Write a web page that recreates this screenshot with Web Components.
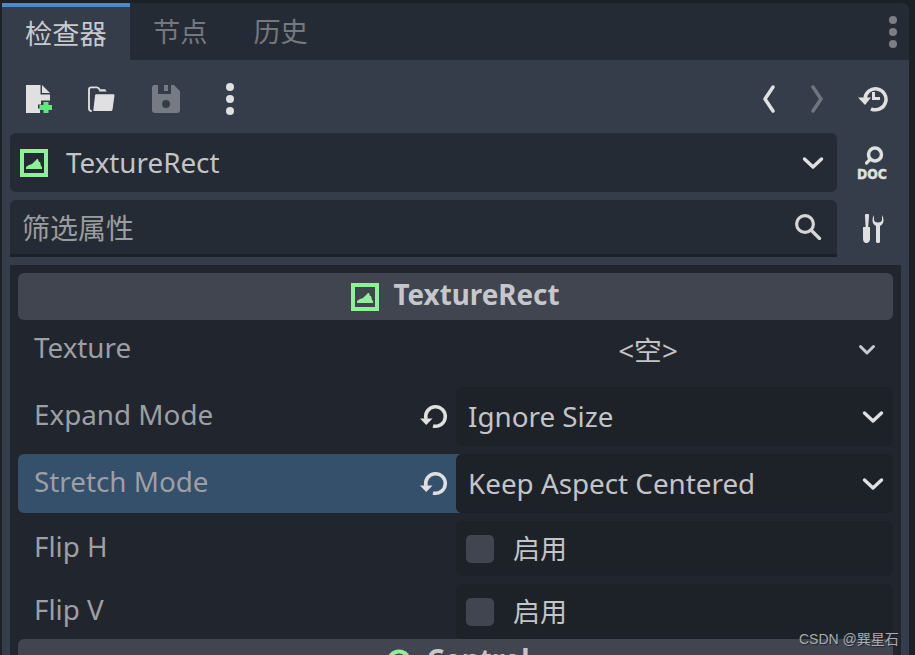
<!DOCTYPE html>
<html lang="zh">
<head>
<meta charset="utf-8">
<title>检查器</title>
<style>
  html, body { margin: 0; height: 655px; overflow: hidden; background: #1c2027; }
  body { font-family: "Noto Sans", "Noto Sans CJK SC", sans-serif; color: #d0d1d4; }
</style>
</head>
<body>
<inspector-dock>
  <dock-tabs slot="tabs"></dock-tabs>
  <dock-toolbar slot="toolbar"></dock-toolbar>
  <class-field slot="fields"></class-field>
  <filter-field slot="fields"></filter-field>
  <prop-section slot="list" title="TextureRect">
    <prop-row label="Texture" height="59"><value-picker text="&lt;空&gt;" centered></value-picker></prop-row>
    <prop-row label="Expand Mode" height="59" revert><value-picker text="Ignore Size"></value-picker></prop-row>
    <prop-row label="Stretch Mode" height="59" revert selected><value-picker text="Keep Aspect Centered"></value-picker></prop-row>
    <prop-row label="Flip H" height="55"><check-field text="启用"></check-field></prop-row>
    <prop-row label="Flip V" height="55"><check-field text="启用"></check-field></prop-row>
  </prop-section>
  <section-next slot="list" title="Control"></section-next>
</inspector-dock>
<water-mark>CSDN @巽星石</water-mark>

<script>
// 图标表
const ICONS = {
  newfile: `<svg width="28" height="28" viewBox="-2 0 28 28"><path fill="#e0e0e0" d="M0 0h14.500v9.500h9.500v6H15v4h-3v4h2v4.500H0z"/><path fill="#e0e0e0" d="M16 0l8 8h-8z"/><path fill="#5fe97a" d="M17.500 17h5v3H26.500v5h-4v3h-5v-3h-4v-5h4z"/></svg>`,
  folder: `<svg width="28" height="26" viewBox="0 0 30 28"><path fill="none" stroke="#e0e0e0" stroke-width="2" d="M4 27c-2 0-3-1-3-3V4c0-1.500 1-2.500 2.500-2.500h6c1.500 0 2 .5 3 2.500"/><path fill="#e0e0e0" d="M12 3.500h6.500l1.500 2.500h-8z"/><path fill="#e0e0e0" d="M9 9h18c1 0 1.500.5 1.400 1.500l-2 14.500c-.2 1.300-1 2-2.200 2H6.500c-.8 0-1-.5-.8-1.500L7.500 10.500C7.700 9.500 8 9 9 9z"/></svg>`,
  save: `<svg width="28" height="28" viewBox="0 0 28 28"><path fill-rule="evenodd" fill="#767a82" d="M2 0h4v9h13V0h3l6 6v19c0 2-1 3-3 3H3c-2 0-3-1-3-3V3c0-2 1-3 2-3zM14 15a4 4 0 1 0 0 8 4 4 0 0 0 0-8z"/><path fill="#767a82" d="M12 0h4v6h-4z"/></svg>`,
  dots: `<svg width="10" height="34" viewBox="0 0 10 34"><circle cx="5" cy="5" r="4" fill="#e0e0e0"/><circle cx="5" cy="17" r="4" fill="#e0e0e0"/><circle cx="5" cy="29" r="4" fill="#e0e0e0"/></svg>`,
  tabdots: `<svg width="10" height="34" viewBox="0 0 10 34"><circle cx="5" cy="5" r="4" fill="#7b7e84"/><circle cx="5" cy="17" r="4" fill="#7b7e84"/><circle cx="5" cy="29" r="4" fill="#7b7e84"/></svg>`,
  back: `<svg width="14" height="28" viewBox="0 0 14 28"><path fill="none" stroke="#e0e0e0" stroke-width="3.500" stroke-linecap="round" stroke-linejoin="round" d="M11 2L3 14l8 12"/></svg>`,
  forward: `<svg width="14" height="28" viewBox="0 0 14 28"><path fill="none" stroke="#70747b" stroke-width="3.500" stroke-linecap="round" stroke-linejoin="round" d="M3 2l8 12L3 26"/></svg>`,
  history: `<svg width="30" height="26" viewBox="0 0 30 26"><path fill="none" stroke="#e0e0e0" stroke-width="3.500" d="M7 13a10.500 10.500 0 1 1 6 9.800"/><path fill="#e0e0e0" d="M0 11.500h13L7 19z"/><path fill="#e0e0e0" d="M14 6h3v5h5v3h-8z"/></svg>`,
  chevron: `<svg width="22" height="14" viewBox="0 0 22 14"><path fill="none" stroke="#e0e0e0" stroke-width="3.400" stroke-linecap="round" stroke-linejoin="round" d="M2.500 3L11 11l8.500-8"/></svg>`,
  chevronsmall: `<svg width="18" height="12" viewBox="0 0 18 12"><path fill="none" stroke="#c9cacd" stroke-width="3" stroke-linecap="round" stroke-linejoin="round" d="M2.500 2.500L9 9l6.500-6.500"/></svg>`,
  doc: `<svg width="32" height="38" viewBox="0 0 32 38"><circle cx="18" cy="10.500" r="6.500" fill="none" stroke="#e0e0e0" stroke-width="3.500"/><path stroke="#e0e0e0" stroke-width="3.200" stroke-linecap="round" d="M13 15.500l-3.500 3.500"/><text transform="translate(0 34.500) scale(1 1.200)" font-family="'DejaVu Sans'" font-weight="700" font-size="12.400" stroke="#e0e0e0" stroke-width=".4" fill="#e0e0e0">DOC</text></svg>`,
  search: `<svg width="28" height="28" viewBox="0 0 28 28"><circle cx="11" cy="12" r="8.400" fill="none" stroke="#d5d5d5" stroke-width="3.200"/><path stroke="#d5d5d5" stroke-width="3.400" stroke-linecap="round" d="M17 18l8.500 8.500"/></svg>`,
  tools: `<svg width="26" height="30" viewBox="0 0 26 30"><path fill="#e0e0e0" d="M5 1.500a2 2 0 0 1 4 0L8.200 13h1.300c.6 0 .5.500.5 1v11c0 2.500-1.800 4-3.200 4h-1C4.800 29 3 27.500 3 25V14c0-.5 0-1 .6-1h2z"/><path fill="#e0e0e0" d="M14 1c-1 2-1.500 3.500-1.500 5.500 0 2.700 1.500 4.500 3.500 5.500v15.500c0 1 1 1.500 2 1.500s2-.5 2-1.500V12c2-1 3.500-2.800 3.500-5.500C23.500 4.500 23 3 22 1v5c0 1-1.500 2.500-4 2.500S14 7 14 6z"/></svg>`,
  texturerect: `<svg width="28" height="28" viewBox="0 0 28 28"><rect x="2" y="2" width="24" height="24" fill="none" stroke="#8ef097" stroke-width="4"/><path fill="#8ef097" d="M6 20v-2l3-2 3-1 2-2 3-3h1l1 3h1l1 4 1 1v2z"/></svg>`,
  revert: `<svg width="28" height="28" viewBox="0 0 28 28"><path fill="none" stroke="#e0e0e0" stroke-width="3.500" d="M6 16A9.800 9.800 0 1 1 13 23"/><path fill="#e0e0e0" d="M0 15.500h12.500L6.200 22z"/></svg>`,
  control: `<svg width="28" height="28" viewBox="0 0 28 28"><circle cx="14" cy="14" r="10.500" fill="none" stroke="#8ef097" stroke-width="4"/></svg>`
};

class GodotBase extends HTMLElement {
  render(css, html) {
    if (!this.shadowRoot) this.attachShadow({ mode: 'open' });
    this.shadowRoot.innerHTML = `<style>${css}</style>${html}`;
  }
}

class InspectorDock extends GodotBase {
  connectedCallback() {
    this.render(`
      :host { display: flex; flex-direction: column; width: 907px; height: 652px; margin: 3px 0 0 2px;
        background: #363d4a; border-top-right-radius: 8px; overflow: hidden; }
      .fields { display: flex; flex-direction: column; gap: 8px; padding: 0 0 8px 8px; }
      .list { flex: 1; display: flex; flex-direction: column; margin: 0 8px; padding: 8px 8px 0;
        background: #21262e; min-height: 0; overflow: hidden; }
    `, `
      <slot name="tabs"></slot>
      <slot name="toolbar"></slot>
      <div class="fields"><slot name="fields"></slot></div>
      <div class="list"><slot name="list"></slot></div>
    `);
  }
}

class DockTabs extends GodotBase {
  connectedCallback() {
    this.render(`
      :host { display: flex; height: 57px; background: #252b34; font-size: 27.200px; }
      .tab { padding: 0 23px; line-height: 58px; color: #75787e; white-space: nowrap; }
      .tab.on { width: 82px; height: 53px; color: #c9cacc; background: #363d4a; border-top: 4px solid #5089c0; line-height: 53px; }
      .more { margin: 0 11px 0 auto; padding-top: 12px; }
    `, `
      <div class="tab on">检查器</div>
      <div class="tab">节点</div>
      <div class="tab">历史</div>
      <div class="more">${ICONS.tabdots}</div>
    `);
  }
}

class DockToolbar extends GodotBase {
  connectedCallback() {
    this.render(`
      :host { display: flex; align-items: center; height: 73px; box-sizing: border-box; padding: 5px 4px 0 4px; }
      .b { display: flex; align-items: center; justify-content: center; width: 64px; height: 34px; }
      .n { width: 48px; }
      .gap { flex: 1; }
    `, `
      <div class="b">${ICONS.newfile}</div>
      <div class="b">${ICONS.folder}</div>
      <div class="b">${ICONS.save}</div>
      <div class="b">${ICONS.dots}</div>
      <div class="gap"></div>
      <div class="b n">${ICONS.back}</div>
      <div class="b n">${ICONS.forward}</div>
      <div class="b">${ICONS.history}</div>
    `);
  }
}

class ClassField extends GodotBase {
  connectedCallback() {
    this.render(`
      :host { display: flex; align-items: center; gap: 8px; height: 59px; }
      .box { display: flex; align-items: center; width: 827px; height: 59px; box-sizing: border-box;
        padding: 0 13px 0 10px; background: #252b34; border-radius: 6px; font-size: 27.800px; color: #c3c4c7; }
      .name { margin-left: 18px; flex: 1; padding-bottom: 2px; }
      .ic { display: flex; justify-content: center; width: 56px; }
      svg { display: block; }
    `, `
      <div class="box">${ICONS.texturerect}<span class="name">TextureRect</span>${ICONS.chevron}</div>
      <div class="ic">${ICONS.doc}</div>
    `);
  }
}

class FilterField extends GodotBase {
  connectedCallback() {
    this.render(`
      :host { display: flex; align-items: center; gap: 8px; height: 57px; }
      .box { display: flex; align-items: center; width: 827px; height: 57px; box-sizing: border-box;
        padding: 0 15px 0 12px; background: #252b34; border-bottom: 3px solid #1c2027;
        border-radius: 6px 6px 0 0; font-size: 28px; color: #9a9c9f; }
      .txt { flex: 1; }
      .box svg { margin-bottom: 2px; }
      .ic { display: flex; justify-content: center; width: 56px; }
      svg { display: block; }
    `, `
      <div class="box"><span class="txt">筛选属性</span>${ICONS.search}</div>
      <div class="ic">${ICONS.tools}</div>
    `);
  }
}

class PropSection extends GodotBase {
  connectedCallback() {
    this.render(`
      :host { display: block; }
      .head { display: flex; align-items: center; justify-content: center; gap: 14px; height: 47px;
        background: #41454f; border-radius: 6px; font-size: 27.800px; font-weight: 700; color: #c6c7cb; }
      .head span { padding-bottom: 6px; }
      svg { display: block; }
      .rows { display: flex; flex-direction: column; gap: 8px; }
    `, `
      <div class="head">${ICONS.texturerect}<span>${this.getAttribute('title')}</span></div>
      <div class="rows"><slot></slot></div>
    `);
  }
}

class SectionNext extends GodotBase {
  connectedCallback() {
    this.render(`
      :host { display: block; height: 47px; background: #41454f; border-radius: 6px 6px 0 0; }
      .head { display: flex; align-items: flex-start; justify-content: center; gap: 14px; padding: 6px 0 0 3px;
        font-size: 27.800px; font-weight: 700; color: #c6c7cb; line-height: 28px; }
      svg { display: block; margin-top: 3px; }
    `, `<div class="head">${ICONS.control}<span>${this.getAttribute('title')}</span></div>`);
  }
}

class PropRow extends GodotBase {
  connectedCallback() {
    const sel = this.hasAttribute('selected');
    this.render(`
      :host { display: grid; grid-template-columns: 438px 437px; height: ${this.getAttribute('height')}px; font-size: 27.800px; color: #9d9fa3; }
      .lab { display: flex; align-items: center; justify-content: space-between; box-sizing: border-box;
        padding: 0 8px 0 16px; ${sel ? 'background: #34506b; border-radius: 6px 0 0 6px; margin-right: -4px; padding-right: 12px;' : ''} }
      .lab span { padding-bottom: 6px; }
      svg { display: block; }
      .val { position: relative; min-width: 0; }
    `, `
      <div class="lab"><span>${this.getAttribute('label')}</span>${this.hasAttribute('revert') ? ICONS.revert : ''}</div>
      <div class="val"><slot></slot></div>
    `);
  }
}

class ValuePicker extends GodotBase {
  connectedCallback() {
    const centered = this.hasAttribute('centered');
    this.render(`
      :host { display: flex; align-items: center; height: 100%; box-sizing: border-box;
        padding: 0 ${centered ? 17 : 9}px 0 12px;
        border-radius: 6px; font-size: 27.800px; color: #c3c4c7; ${centered ? '' : 'background: #1d2128;'} }
      .t { flex: 1; padding-bottom: 2px; ${centered ? 'text-align: center; padding-right: 30px;' : ''} }
      svg { display: block; }
    `, `<span class="t">${this.getAttribute('text').replace(/</g, '&lt;')}</span>${centered ? ICONS.chevronsmall : ICONS.chevron}`);
  }
}

class CheckField extends GodotBase {
  connectedCallback() {
    this.render(`
      :host { display: flex; align-items: center; gap: 19px; height: 100%; box-sizing: border-box; padding: 0 10px;
        background: #1d2128; border-radius: 6px; font-size: 27px; color: #c3c4c7; }
      .box { width: 28px; height: 28px; background: #41454f; border-radius: 5px; }
      span { padding-bottom: 2px; }
    `, `<div class="box"></div><span>${this.getAttribute('text')}</span>`);
  }
}

class WaterMark extends GodotBase {
  connectedCallback() {
    this.render(`
      :host { position: absolute; left: 799px; top: 628px; font: 14px "Liberation Sans", "Noto Sans CJK SC", sans-serif;
        color: #a9abae; text-shadow: 1px 1px 1px #22252b; white-space: nowrap; }
    `, `<slot></slot>`);
  }
}

customElements.define('inspector-dock', InspectorDock);
customElements.define('dock-tabs', DockTabs);
customElements.define('dock-toolbar', DockToolbar);
customElements.define('class-field', ClassField);
customElements.define('filter-field', FilterField);
customElements.define('prop-section', PropSection);
customElements.define('section-next', SectionNext);
customElements.define('prop-row', PropRow);
customElements.define('value-picker', ValuePicker);
customElements.define('check-field', CheckField);
customElements.define('water-mark', WaterMark);
</script>
</body>
</html>
